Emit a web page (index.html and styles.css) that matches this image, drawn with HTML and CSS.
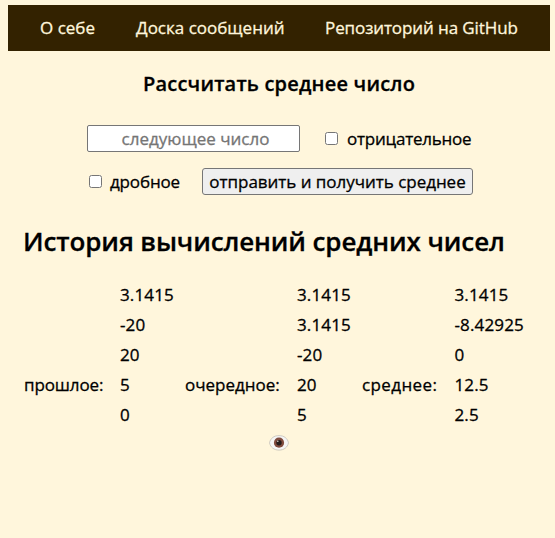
FILE: index.html
```
<!DOCTYPE html>
<html lang="ru">
<head>
<meta charset="utf-8">
<title>Среднее число</title>
<link rel="stylesheet" href="styles.css">
</head>
<body>
<nav class="nav">
  <a class="about" href="#">О себе</a>
  <a class="board" href="#">Доска сообщений</a>
  <a class="repo" href="#">Репозиторий на GitHub</a>
</nav>
<main>
  <h1 class="title">Рассчитать среднее число</h1>
  <form class="form">
    <div class="row first">
      <input class="number" type="text" placeholder="следующее число">
      <label class="check negative"><input type="checkbox"><span>отрицательное</span></label>
    </div>
    <div class="row second">
      <label class="check fraction"><input type="checkbox"><span>дробное</span></label>
      <button class="send" type="button">отправить и получить среднее</button>
    </div>
  </form>
  <h2 class="history-title">История вычислений средних чисел</h2>
  <section class="history">
    <span class="name previous">прошлое:</span>
    <div class="values"><span>3.1415</span><span>-20</span><span>20</span><span>5</span><span>0</span></div>
    <span class="name next">очередное:</span>
    <div class="values"><span>3.1415</span><span>3.1415</span><span>-20</span><span>20</span><span>5</span></div>
    <span class="name average">среднее:</span>
    <div class="values"><span>3.1415</span><span>-8.42925</span><span>0</span><span>12.5</span><span>2.5</span></div>
  </section>
  <svg class="eye" width="20" height="16" viewBox="0 0 20 16">
    <path d="M.5 7.8C1.5 3.2 5 .6 10 .6S18.5 3.2 19.5 7.8C18.5 12.5 15 15.1 10 15.1S1.5 12.5 .5 7.8Z" fill="#f5f5f5" stroke="#c4c0b6" stroke-width=".8"/>
    <circle cx="10" cy="7.7" r="5.1" fill="#804b3e"/>
    <circle cx="10" cy="7.7" r="2.7" fill="#241b1b"/>
    <circle cx="8.8" cy="6.2" r=".8" fill="#d9d0cd"/>
  </svg>
</main>
</body>
</html>
```
FILE: styles.css
```
* { box-sizing: border-box; }
body {
  margin: 5px 5px 0 8px;
  background: #fff6dc;
  color: #000;
  font: 500 17px/30px "Open Sans", "Noto Sans", sans-serif;
  -webkit-text-stroke: .3px currentColor;
  white-space: nowrap;
  overflow: hidden;
}
.nav {
  display: flex;
  align-items: center;
  height: 46px;
  padding-left: 32px;
  background: #332200;
}
.nav a { color: #fff6dc; text-decoration: none; }
.about { width: 96px; }
.board { width: 189px; }
.repo { letter-spacing: -.1px; }
.title {
  margin: 18px 0 0;
  font-size: 20px;
  font-weight: 600;
  line-height: 30px;
  letter-spacing: .2px;
  padding-left: 135px;
}
.form { margin: 26px 0 0; }
.row { display: flex; align-items: center; height: 27px; }
.first { padding-left: 79px; }
.second { padding-left: 81px; margin-top: 16px; }
.number {
  width: 213px;
  height: 27px;
  margin: 0 25px 0 0;
  padding: 0 0 0 4px;
  border: 1px solid #767676;
  border-radius: 2px;
  background: #fff;
  font: inherit;
  line-height: 24px;
  text-align: center;
}
.number::placeholder { color: #757575; opacity: 1; }
.check { display: flex; align-items: center; }
.check input { width: 13px; height: 13px; margin: 0 9px 0 0; }
.negative { letter-spacing: -.23px; }
.fraction { width: 113px; letter-spacing: -.15px; }
.fraction input { margin-right: 8px; }
.send {
  width: 271px;
  height: 27px;
  padding: 0;
  border: 1px solid #767676;
  border-radius: 3px;
  background: #efefef;
  color: #000;
  font: inherit;
  line-height: 24px;
  letter-spacing: -.03px;
}
.history-title {
  margin: 29px 0 0 15px;
  font-size: 26px;
  font-weight: 600;
  line-height: 34px;
  letter-spacing: -.1px;
}
.history {
  display: grid;
  grid-template-columns: 96px 65px 112px 65px 92.5px auto;
  margin: 22px 0 0 16px;
}
.values { display: flex; flex-direction: column; letter-spacing: .15px; }
.name { padding-top: 90px; }
.previous { letter-spacing: -.12px; }
.average { letter-spacing: .4px; }
.eye { display: block; margin: 5px 0 0 261px; }
```
